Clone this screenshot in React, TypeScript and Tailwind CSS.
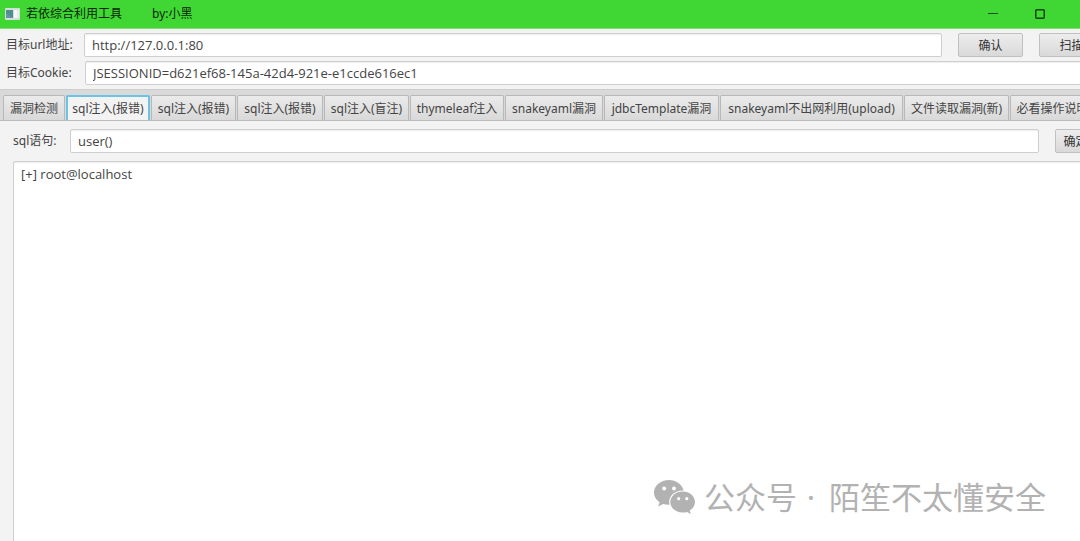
import React, { useState } from 'react';
import clsx from 'clsx';

interface TabItem {
  id: string;
  label: string;
  width: string;
}

const TABS: TabItem[] = [
  { id: 'scan', label: '漏洞检测', width: 'w-[62px]' },
  { id: 'sql-1', label: 'sql注入(报错)', width: 'w-[84px]' },
  { id: 'sql-2', label: 'sql注入(报错)', width: 'w-[85px]' },
  { id: 'sql-3', label: 'sql注入(报错)', width: 'w-[86px]' },
  { id: 'sql-blind', label: 'sql注入(盲注)', width: 'w-[85px]' },
  { id: 'thymeleaf', label: 'thymeleaf注入', width: 'w-[94px]' },
  { id: 'snakeyaml', label: 'snakeyaml漏洞', width: 'w-[98px]' },
  { id: 'jdbc', label: 'jdbcTemplate漏洞', width: 'w-[115px]' },
  { id: 'upload', label: 'snakeyaml不出网利用(upload)', width: 'w-[183px]' },
  { id: 'file', label: '文件读取漏洞(新)', width: 'w-[105px]' },
  { id: 'help', label: '必看操作说明', width: 'w-[85px]' },
];

const TextField: React.FC<React.InputHTMLAttributes<HTMLInputElement>> = ({ className, ...props }) => (
  <input
    type="text"
    className={clsx(
      "h-6 min-w-0 rounded-[2px] border border-[#cfcfcf] bg-white px-[7px] font-['Open_Sans','Noto_Sans_CJK_SC',sans-serif] text-[13px] text-[#444] shadow-[inset_0_1px_1px_#eeeeee] outline-none",
      className,
    )}
    {...props}
  />
);

const Button: React.FC<React.ButtonHTMLAttributes<HTMLButtonElement>> = ({ className, ...props }) => (
  <button
    type="button"
    className={clsx(
      'h-6 shrink-0 rounded-[2px] border border-[#c0c0c0] bg-linear-to-b from-[#ededed] to-[#d9d9d9] pt-px text-xs text-[#333]',
      className,
    )}
    {...props}
  />
);

const TitleBar: React.FC = () => (
  <header className="flex h-[29px] shrink-0 items-center border-b border-[#7be272] bg-[#40d634] pl-[5px] text-xs text-[#0b250a]">
    <svg width="15" height="12" viewBox="0 0 15 12" aria-hidden="true">
      <rect width="15" height="12" rx="1" fill="#d5dfd9" />
      <rect x="1" y="2" width="7" height="8" fill="#4d8f8c" />
      <path d="M1 10V5l7 5z" fill="#6b8fae" />
      <rect x="9" y="2" width="3" height="8" fill="#f6f6f6" />
      <rect x="12" y="2" width="2" height="8" fill="#eceaea" />
    </svg>
    <h1 className="ml-[6px] w-[126px]">若依综合利用工具</h1>
    <span className="flex-1">by:小黑</span>
    <button type="button" aria-label="最小化" className="flex h-full w-[47px] items-center justify-center">
      <svg width="10" height="10" viewBox="0 0 10 10">
        <path d="M0 4.5h10" stroke="#145010" />
      </svg>
    </button>
    <button type="button" aria-label="最大化" className="mr-[17px] flex h-full w-[47px] items-center justify-center">
      <svg width="10" height="10" viewBox="0 0 10 10" fill="none">
        <rect x="0.75" y="0.75" width="8.5" height="8.5" rx="1" stroke="#124510" strokeWidth="1.5" />
      </svg>
    </button>
  </header>
);

export default function App() {
  const [active, setActive] = useState('sql-1');

  return (
    <div className="relative flex h-screen flex-col overflow-hidden bg-[#f3f3f3] font-['Noto_Sans','Noto_Sans_CJK_SC',sans-serif] text-xs text-[#444]">
      <TitleBar />

      {/* Target */}
      <section className="flex shrink-0 flex-col gap-1 pt-1 pb-1">
        <div className="flex items-center pl-[6px]">
          <label htmlFor="url" className="w-[78px] shrink-0 whitespace-nowrap">目标url地址:</label>
          <TextField id="url" defaultValue="http://127.0.0.1:80" className="flex-1" />
          <Button className="ml-4 w-[65px]">确认</Button>
          <Button className="-mr-6 ml-4 w-[65px]">扫描</Button>
        </div>
        <div className="flex items-center pl-[6px]">
          <label htmlFor="cookie" className="w-[79px] shrink-0 whitespace-nowrap">目标Cookie:</label>
          <TextField
            id="cookie"
            defaultValue="JSESSIONID=d621ef68-145a-42d4-921e-e1ccde616ec1"
            className="-mr-6 flex-1"
          />
        </div>
      </section>

      {/* Tabs */}
      <nav
        role="tablist"
        className="flex h-8 shrink-0 items-end gap-px border-y border-t-[#cdcdcd] border-b-[#bcbcbc] bg-[#d9d9d9] pl-[3px]"
      >
        {TABS.map((tab) => (
          <button
            key={tab.id}
            type="button"
            role="tab"
            aria-selected={active === tab.id}
            onClick={() => setActive(tab.id)}
            className={clsx(
              'h-[25px] shrink-0 rounded-t-[2px] whitespace-nowrap',
              tab.width,
              active === tab.id
                ? 'border-2 border-b-0 border-[#6cc4e4] bg-[#f3f3f3]'
                : 'border border-b-0 border-[#b8b8b8] bg-linear-to-b from-[#ebebeb] to-[#d9d9d9] pt-px',
            )}
          >
            {tab.label}
          </button>
        ))}
      </nav>

      {/* Query */}
      <main className="flex min-h-0 flex-1 flex-col gap-2 pt-2 pl-[13px]">
        <div className="flex shrink-0 items-center">
          <label htmlFor="sql" className="w-[57px] shrink-0 whitespace-nowrap">sql语句:</label>
          <TextField id="sql" defaultValue="user()" className="flex-1" />
          <Button className="-mr-4 ml-4 w-[41px]">确定</Button>
        </div>
        <textarea
          aria-label="结果"
          defaultValue="[+] root@localhost"
          className="-mr-4 -mb-4 min-h-0 flex-1 resize-none rounded-[2px] border border-[#cfcfcf] bg-white px-[7px] py-[3px] font-['Open_Sans','Noto_Sans_CJK_SC',sans-serif] text-[13px] leading-[18px] text-[#444] shadow-[inset_0_1px_1px_#eeeeee] outline-none"
        />
      </main>

      {/* Watermark */}
      <div className="pointer-events-none absolute right-[34px] bottom-[22px] flex items-center text-[#b2b2b2]">
        <svg width="42" height="34" viewBox="0 0 42 34" fill="currentColor" aria-hidden="true">
          <path d="M15 0C6.500 0 0 5.600 0 12.600c0 4 2.100 7.400 5.600 9.700L4.200 26.500l5-2.600c1.900.6 4 .9 6.400.8-.3-1-.4-2-.4-3 0-6.300 6-11.300 13.300-11.300h1.100C28.100 4.300 22.100 0 15 0z" />
          <path d="M28.700 11.500c-7 0-12.400 4.700-12.400 10.500S21.700 32.500 28.700 32.500c1.500 0 2.900-.2 4.200-.6l4 2.100-1.100-3.600c3.200-1.900 5.200-4.900 5.200-8.400 0-5.800-5.300-10.500-12.300-10.500z" />
          <g fill="#fff">
            <circle cx="10.200" cy="8.500" r="1.900" />
            <circle cx="20" cy="8.500" r="1.900" />
            <circle cx="24.700" cy="18.700" r="1.600" />
            <circle cx="32.800" cy="18.700" r="1.600" />
          </g>
        </svg>
        <p className="ml-2 flex text-[31px] leading-[44px]">
          <span>公众号</span>
          <span className="w-8 pr-1 text-center">·</span>
          <span>陌笙不太懂安全</span>
        </p>
      </div>
    </div>
  );
}
